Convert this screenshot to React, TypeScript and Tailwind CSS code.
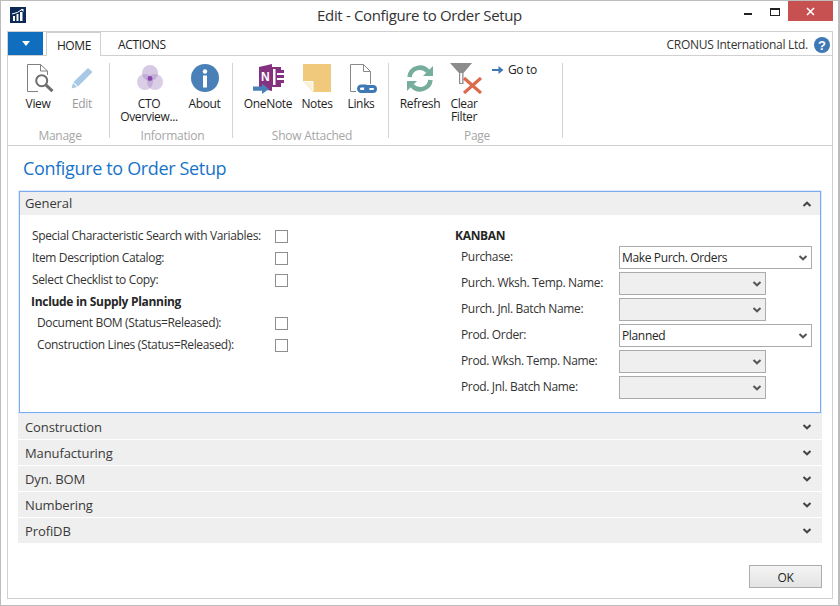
import React from "react";

const Chev = ({ up = false, color = "#444" }: { up?: boolean; color?: string }) => (
  <svg width="10" height="8" viewBox="0 0 10 8" className={up ? "rotate-180" : ""}>
    <path d="M1.5 2 L5 5.3 L8.5 2" fill="none" stroke={color} strokeWidth="2" />
  </svg>
);

const Logo = () => (
  <svg width="16" height="16" viewBox="0 0 16 16">
    <rect width="16" height="16" fill="#0b2a56" />
    <rect x="3" y="9" width="2" height="5" fill="#fff" />
    <rect x="6.5" y="7" width="2" height="7" fill="#fff" />
    <rect x="10" y="5" width="2.5" height="9" fill="#fff" />
    <path d="M2 7 Q8 6 12 2.5" fill="none" stroke="#fff" strokeWidth="1" />
    <path d="M10.5 2 L13.5 2 L13.5 5 Z" fill="#fff" />
  </svg>
);

const ViewIcon = () => (
  <svg width="27" height="28" viewBox="0 0 27 28" className="mt-[1px] ml-[5px]">
    <path d="M20.5 11 V7 L13.5 0.5 H0.5 V27.5 H11" fill="none" stroke="#808080" />
    <path d="M13.5 0.5 V7 H20.5" fill="none" stroke="#808080" />
    <circle cx="14.7" cy="16.7" r="5.5" fill="#fff" stroke="#6e6e6e" strokeWidth="2" />
    <path d="M18.8 20.8 L25.5 27.2" stroke="#6e6e6e" strokeWidth="3" />
  </svg>
);

const EditIcon = () => (
  <svg width="22" height="22" viewBox="0 0 22 22" className="mt-[4px]">
    <path d="M17 1 L21.5 5 L7 19.5 L2.5 15 Z" fill="#a9c8e6" />
    <path d="M2 16 L6 20 L0.5 21.5 Z" fill="#a9c8e6" />
  </svg>
);

const CtoIcon = () => (
  <svg width="26" height="25" viewBox="0 0 26 25" className="mt-[2px] ml-[2px]">
    <circle cx="13" cy="8" r="8" fill="#9f7fbf" fillOpacity="0.42" />
    <circle cx="8" cy="17" r="8" fill="#9f7fbf" fillOpacity="0.38" />
    <circle cx="18" cy="17" r="8" fill="#9f7fbf" fillOpacity="0.38" />
    <circle cx="13" cy="13.5" r="2.4" fill="#8548ab" />
  </svg>
);

const AboutIcon = () => (
  <svg width="28" height="28" viewBox="0 0 28 28" className="mt-[1px]">
    <circle cx="14" cy="14" r="14" fill="#4a80b8" />
    <circle cx="14" cy="7.5" r="2.2" fill="#fff" />
    <rect x="12" y="11.5" width="4" height="12" fill="#fff" />
  </svg>
);

const OneNoteIcon = () => (
  <svg width="31" height="30" viewBox="0 0 31 30" className="mt-[1px]">
    <path d="M6 3 L19 0 V27 L6 24 Z" fill="#84327f" />
    <rect x="19" y="3" width="9" height="20" fill="#84327f" />
    <rect x="20" y="5" width="2.5" height="16" fill="#fff" />
    <path d="M24 6 H31 V9 H24 Z M24 11 H31 V14 H24 Z M24 16 H31 V19 H24 Z" fill="#84327f" />
    <path d="M24 9 H28 V11 H24 Z M24 14 H28 V16 H24 Z" fill="#fff" />
    <text x="8" y="17" fill="#fff" fontSize="12" fontWeight="700" fontFamily="Liberation Sans" letterSpacing="0">N</text>
    <path d="M0 22.6 H9 V19.5 L16 25 L9 30 V26.8 H0 Z" fill="#4a80b8" />
  </svg>
);

const NotesIcon = () => (
  <svg width="28" height="28" viewBox="0 0 28 28" className="mt-[1px]">
    <path d="M0 0 H28 V28 H10 L0 17 Z" fill="#f0c97c" />
    <path d="M0 17 H10 V28 Z" fill="#fbf0d8" />
    <path d="M0.5 17.5 H10 V27.5" fill="none" stroke="#fff" />
  </svg>
);

const LinksIcon = () => (
  <svg width="27" height="29" viewBox="0 0 27 29" className="mt-[1px] ml-[5px]">
    <path d="M0.5 27.5 V0.5 H13.5 L20.5 7.5 V20" fill="none" stroke="#8a8a8a" />
    <path d="M0.5 27.5 H6" fill="none" stroke="#8a8a8a" />
    <path d="M13.5 0.5 V7.5 H20.5" fill="none" stroke="#8a8a8a" />
    <rect x="8.5" y="22" width="9.5" height="5.5" rx="2.7" fill="none" stroke="#3f79b5" strokeWidth="3" />
    <rect x="15.5" y="22.5" width="10" height="5" rx="2.5" fill="none" stroke="#3f79b5" strokeWidth="3" />
  </svg>
);

const RefreshIcon = () => (
  <svg width="28" height="27" viewBox="0 0 28 27" className="mt-[2px]">
    <path d="M3.5 12 A10.5 10.5 0 0 1 22 6.5" fill="none" stroke="#76ad9c" strokeWidth="4.5" />
    <path d="M17 11 H27 V1 Z" fill="#76ad9c" />
    <path d="M24.5 15 A10.5 10.5 0 0 1 6 20.5" fill="none" stroke="#76ad9c" strokeWidth="4.5" />
    <path d="M11 16 H1 V26 Z" fill="#76ad9c" />
  </svg>
);

const ClearFilterIcon = () => (
  <svg width="32" height="32" viewBox="0 0 32 32" className="-mt-[1px] ml-[3px]">
    <path d="M0 1 H22 L13.5 11 V22 H9 V11 Z" fill="#8c8c8c" />
    <rect x="10.2" y="11" width="2" height="10" fill="#fff" />
    <path d="M14 16 L31 31 M31 16 L14 31" stroke="#dc6a4c" strokeWidth="3.2" />
  </svg>
);

const GoToIcon = () => (
  <svg width="12" height="10" viewBox="0 0 12 10">
    <path d="M0 4 H6.5 V1 L11.5 5 L6.5 9 V6 H0 Z" fill="#3f79b5" />
  </svg>
);

const HelpIcon = () => (
  <svg width="16" height="16" viewBox="0 0 16 16">
    <circle cx="8" cy="8" r="8" fill="#3f79b5" />
    <text x="8" y="12.5" textAnchor="middle" fill="#fff" fontSize="13" fontWeight="700" fontFamily="Liberation Sans" letterSpacing="0">?</text>
  </svg>
);

const RibbonBtn = ({ w, icon, label, muted = false }: { w: string; icon: React.ReactNode; label: React.ReactNode; muted?: boolean }) => (
  <div className={`${w} flex flex-col items-center`}>
    <div className="h-[34px] flex items-start justify-center">{icon}</div>
    <div className={`text-center leading-[13px] ${muted ? "text-[#9a9a9a]" : "text-[#1e1e1e]"}`}>{label}</div>
  </div>
);

const Group = ({ w, pl, label, children }: { w: string; pl: string; label: string; children: React.ReactNode }) => (
  <div className={`${w} h-[75px] border-r border-[#d4d4d4] relative ${pl} flex items-start shrink-0`}>
    {children}
    <div className="absolute left-[3px] right-0 top-[65px] text-center text-[#a6a6a6] leading-[15px] tracking-[-0.25px]">{label}</div>
  </div>
);

const CheckRow = ({ label, bold = false, indent = false, h, check = true }: { label: string; bold?: boolean; indent?: boolean; h: string; check?: boolean }) => (
  <div className={`flex items-center ${h}`}>
    <div className={`w-[243px] ${indent ? "pl-[5px] pb-[1px]" : ""} ${bold ? "font-bold -tracking-[0.3px] text-[#262626] -ml-[1px]" : ""}`}>{label}</div>
    {check && <div className="w-[13px] h-[13px] border border-[#8e8e8e] bg-white" />}
  </div>
);

const SelectRow = ({ label, value = "", wide = false }: { label: string; value?: string; wide?: boolean }) => (
  <div className="flex items-start pt-[1px] h-[26px]">
    <div className="w-[164px] pl-[6px] text-[#333] leading-[22px]">{label}</div>
    <div className={`h-[23px] border border-[#ababab] flex items-center justify-between pl-[2px] pr-[3px] ${wide ? "w-[193px] bg-white" : "w-[147px] bg-[#efefef]"}`}>
      <span className="text-[#262626]">{value}</span>
      <Chev color="#555" />
    </div>
  </div>
);

const Fast = ({ label }: { label: string }) => (
  <div className="h-[25px] bg-[#efefef] flex items-center justify-between pl-[7px] pr-[10px] text-[13px] text-[#3a3a3a] tracking-[-0.1px]">
    <span className="pt-[2px]">{label}</span>
    <Chev />
  </div>
);

export default function App() {
  return (
    <div className="w-[840px] h-[606px] bg-white border-l border-t border-b border-r-2 border-[#bcbcbc] flex flex-col text-[12px] text-[#333] overflow-hidden" style={{ fontFamily: '"Open Sans", "Noto Sans", sans-serif', letterSpacing: "-0.35px" }}>
      <div className="h-[30px] flex items-start relative shrink-0">
        <div className="ml-[9px] mt-[6px]"><Logo /></div>
        <div className="absolute left-0 right-0 top-[3px] text-center text-[15px] leading-[22px] text-[#333]">Edit - Configure to Order Setup</div>
        <div className="ml-auto flex items-start mr-[5px]">
          <div className="w-[8px] h-[2px] bg-[#222] mt-[12px] mr-[18px]" />
          <div className="w-[10px] h-[8px] border border-[#222] border-t-2 mt-[7px] mr-[6px]" />
          <div className="w-[45px] h-[20px] bg-[#c75050] ml-[2px] flex items-center justify-center">
            <svg width="9" height="9" viewBox="0 0 9 9"><path d="M1 1 L8 8 M8 1 L1 8" stroke="#fff" strokeWidth="1.6" /></svg>
          </div>
        </div>
      </div>

      <div className="ml-[6px] mr-[5px] mb-[6px] flex-1 border border-[#d0d0d0] bg-white flex flex-col">
        <div className="h-[24px] flex items-end relative shrink-0 border-b border-[#d0d0d0]">
          <div className="w-[35px] h-[23px] bg-[#106ebe] flex items-center justify-center">
            <div className="w-0 h-0 border-x-[4px] border-x-transparent border-t-[5px] border-t-white" />
          </div>
          <div className="ml-[3px] w-[55px] h-[24px] -mb-[1px] pl-[1px] pt-[2px] bg-white border border-b-0 border-[#d0d0d0] flex items-center justify-center text-[#222]">HOME</div>
          <div className="ml-[17px] h-[23px] pt-[2px] flex items-center text-[#222]">ACTIONS</div>
          <div className="ml-auto h-[23px] pt-[2px] flex items-center text-[#333] tracking-[-0.27px]">CRONUS International Ltd.</div>
          <div className="ml-[6px] mr-[2px] h-[23px] pt-[2px] flex items-center"><HelpIcon /></div>
        </div>

        <div className="h-[90px] border-b border-[#d0d0d0] flex items-start pt-[7px] shrink-0">
          <Group w="w-[102px]" pl="pl-[8px]" label="Manage">
            <RibbonBtn w="w-[44px]" icon={<ViewIcon />} label="View" />
            <RibbonBtn w="w-[44px]" icon={<EditIcon />} label="Edit" muted />
          </Group>
          <Group w="w-[123px]" pl="pl-[11px]" label="Information">
            <RibbonBtn w="w-[56px]" icon={<CtoIcon />} label={<>CTO<br />Overview...</>} />
            <RibbonBtn w="w-[56px]" icon={<AboutIcon />} label="About" />
          </Group>
          <Group w="w-[156px]" pl="pl-[10px]" label="Show Attached">
            <RibbonBtn w="w-[50px]" icon={<OneNoteIcon />} label="OneNote" />
            <RibbonBtn w="w-[48px]" icon={<NotesIcon />} label="Notes" />
            <RibbonBtn w="w-[40px]" icon={<LinksIcon />} label="Links" />
          </Group>
          <Group w="w-[174px]" pl="pl-[9px]" label="Page">
            <RibbonBtn w="w-[44px]" icon={<RefreshIcon />} label="Refresh" />
            <RibbonBtn w="w-[44px]" icon={<ClearFilterIcon />} label={<>Clear<br />Filter</>} />
            <div className="ml-[6px] flex items-center gap-[4px] h-[14px] text-[#222]"><GoToIcon /><span>Go to</span></div>
          </Group>
        </div>

        <div className="flex-1 px-[10px] flex flex-col">
          <div className="h-[45px] pt-[9px] pl-[5px] text-[18px] leading-[27px] text-[#1874c8] shrink-0">Configure to Order Setup</div>

          <div className="border border-[#7aabf2] shadow-[0_0_0_1px_rgba(130,175,240,0.25)] mx-[1px] h-[222px] flex flex-col shrink-0">
            <div className="h-[23px] bg-[#efefef] flex items-center justify-between pl-[5px] pr-[8px] text-[13px] text-[#3a3a3a] tracking-[-0.1px]">
              <span>General</span>
              <Chev up />
            </div>
            <div className="flex-1 flex pt-[10px]">
              <div className="w-[435px] pl-[12px] flex flex-col">
                <CheckRow h="h-[22px]" label="Special Characteristic Search with Variables:" />
                <CheckRow h="h-[22px]" label="Item Description Catalog:" />
                <CheckRow h="h-[22px]" label="Select Checklist to Copy:" />
                <CheckRow h="h-[21px]" label="Include in Supply Planning" bold check={false} />
                <CheckRow h="h-[22px]" label="Document BOM (Status=Released):" indent />
                <CheckRow h="h-[22px]" label="Construction Lines (Status=Released):" indent />
              </div>
              <div className="flex flex-col">
                <div className="h-[20px] pt-[2px] font-bold text-[#262626] flex items-center -tracking-[0.3px]">KANBAN</div>
                <SelectRow label="Purchase:" value="Make Purch. Orders" wide />
                <SelectRow label="Purch. Wksh. Temp. Name:" />
                <SelectRow label="Purch. Jnl. Batch Name:" />
                <SelectRow label="Prod. Order:" value="Planned" wide />
                <SelectRow label="Prod. Wksh. Temp. Name:" />
                <SelectRow label="Prod. Jnl. Batch Name:" />
              </div>
            </div>
          </div>

          <div className="flex flex-col gap-[1px] mt-[1px] relative">
            <Fast label="Construction" />
            <Fast label="Manufacturing" />
            <Fast label="Dyn. BOM" />
            <Fast label="Numbering" />
            <Fast label="ProfiDB" />
          </div>

          <div className="flex justify-end mt-[22px]">
            <div className="w-[73px] h-[23px] pt-[2px] border border-[#adadad] bg-gradient-to-b from-[#f4f4f4] to-[#e4e4e4] flex items-center justify-center text-[#222]">OK</div>
          </div>
        </div>
      </div>
    </div>
  );
}
